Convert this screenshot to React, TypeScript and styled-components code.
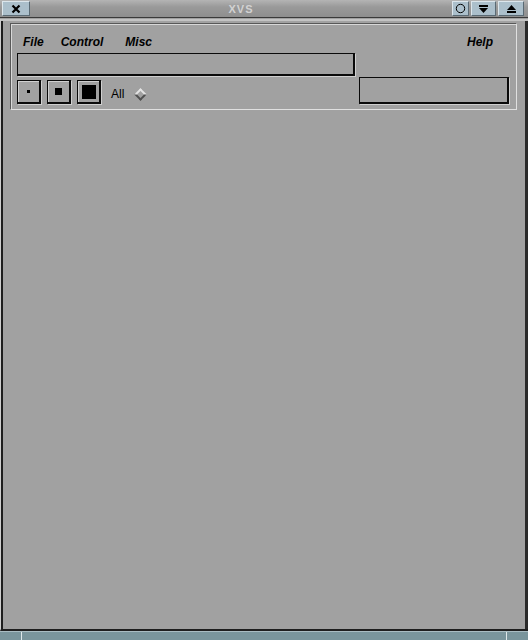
import React from "react";
import styled, { createGlobalStyle } from "styled-components";

const Global = createGlobalStyle`
  html, body { margin: 0; padding: 0; background: #a1a1a1; }
  body { font-family: "Liberation Sans", Arial, sans-serif; }
`;

const Window = styled.div`
  width: 528px;
  height: 640px;
  display: flex;
  flex-direction: column;
  background: #a1a1a1;
  overflow: hidden;
`;

const TitleBar = styled.div`
  height: 18px;
  display: flex;
  align-items: center;
  gap: 2px;
  padding: 0 4px 0 2px;
  box-sizing: border-box;
  background: linear-gradient(#b4b4b4, #9a9a9a 40%, #8e8e8e);
  border-bottom: 1px solid #3a3a3a;
`;

const TitleButton = styled.div<{ $w: number }>`
  width: ${(p) => p.$w}px;
  height: 15px;
  box-sizing: border-box;
  background: #abbfcb;
  border-top: 1px solid #dce6ec;
  border-left: 1px solid #dce6ec;
  border-right: 1px solid #5a6a74;
  border-bottom: 1px solid #5a6a74;
  display: flex;
  align-items: center;
  justify-content: center;
`;

const Title = styled.div`
  flex: 1;
  text-align: center;
  font-size: 11px;
  font-weight: bold;
  color: #d2d2d2;
  letter-spacing: 1px;
`;

const Frame = styled.div`
  flex: 1;
  display: flex;
  flex-direction: column;
  border-left: 1px solid #cfcfcf;
  box-shadow: inset 2px 0 0 #1e1e1e, inset -3px 0 0 #2a2a2a;
  margin-top: 1px;
  padding: 2px 12px 0 9px;
  border-top: 2px solid #c4c4c4;
  border-bottom: 2px solid #1e1e1e;
`;

const Panel = styled.div`
  height: 86px;
  box-sizing: border-box;
  border-top: 1px solid #585858;
  border-left: 1px solid #585858;
  box-shadow: inset 1px 1px 0 #d8d8d8, 1px 1px 0 #e0e0e0;
  padding: 8px 7px 0 6px;
  display: flex;
  flex-direction: column;
`;

const MenuBar = styled.div`
  display: flex;
  align-items: center;
  height: 20px;
  padding-left: 6px;
  padding-right: 16px;
`;

const MenuItem = styled.span<{ $gap: number }>`
  font-style: italic;
  font-weight: bold;
  font-size: 12px;
  color: #000;
  margin-right: ${(p) => p.$gap}px;
`;

const Spacer = styled.div`
  flex: 1;
`;

const Field = styled.div<{ $w: number; $h: number; $top?: number }>`
  width: ${(p) => p.$w}px;
  height: ${(p) => p.$h}px;
  margin-top: ${(p) => p.$top ?? 0}px;
  box-sizing: border-box;
  border: 1px solid #0a0a0a;
  border-right-width: 2px;
  border-bottom-width: 2px;
  box-shadow: 1px 1px 0 #cfcfcf;
  background: #a1a1a1;
`;

const Row = styled.div`
  display: flex;
  align-items: flex-start;
`;

const Tools = styled.div`
  display: flex;
  align-items: center;
  gap: 6px;
  margin-top: 4px;
`;

const SizeButton = styled.div`
  width: 24px;
  height: 24px;
  box-sizing: border-box;
  border: 1px solid #0a0a0a;
  border-right-width: 2px;
  border-bottom-width: 2px;
  box-shadow: inset 1px 1px 0 #d0d0d0, 1px 1px 0 #cfcfcf;
  display: flex;
  align-items: center;
  justify-content: center;
`;

const Dot = styled.div<{ $s: number }>`
  width: ${(p) => p.$s}px;
  height: ${(p) => p.$s}px;
  background: #000;
`;

const AllLabel = styled.span`
  font-size: 12px;
  color: #000;
  margin-left: 4px;
  margin-top: 4px;
`;

const Diamond = styled.div`
  width: 9px;
  height: 9px;
  transform: rotate(45deg);
  box-sizing: border-box;
  border-top: 2px solid #e4e4e4;
  border-left: 2px solid #e4e4e4;
  border-right: 2px solid #505050;
  border-bottom: 2px solid #505050;
  margin-left: 6px;
  margin-top: 4px;
`;

const Body = styled.div`
  flex: 1;
`;

const StatusBar = styled.div`
  height: 8px;
  display: flex;
  background: #7a959c;
  border-top: 1px solid #a9bcc2;
`;

const StatusCell = styled.div<{ $w?: number }>`
  ${(p) => (p.$w ? `width: ${p.$w}px;` : "flex: 1;")}
  border-right: 1px solid #dfe8ea;
  &:last-child { border-right: none; }
`;

export default function App() {
  return (
    <>
      <Global />
      <Window>
        <TitleBar>
          <TitleButton $w={28}>
            <svg width="10" height="10" viewBox="0 0 10 10">
              <path d="M1.5 1.5 L8.5 8.5 M8.5 1.5 L1.5 8.5" stroke="#000" strokeWidth="2.2" />
            </svg>
          </TitleButton>
          <Title>XVS</Title>
          <TitleButton $w={17}>
            <svg width="11" height="11" viewBox="0 0 11 11">
              <circle cx="5.5" cy="5.5" r="4.2" fill="none" stroke="#000" strokeWidth="1" />
            </svg>
          </TitleButton>
          <TitleButton $w={25}>
            <svg width="11" height="10" viewBox="0 0 11 10">
              <rect x="1" y="1" width="9" height="2" fill="#000" />
              <path d="M1 4 L10 4 L5.5 9 Z" fill="#000" />
            </svg>
          </TitleButton>
          <TitleButton $w={26}>
            <svg width="11" height="10" viewBox="0 0 11 10">
              <path d="M1 6 L10 6 L5.5 1 Z" fill="#000" />
              <rect x="1" y="7" width="9" height="2" fill="#000" />
            </svg>
          </TitleButton>
        </TitleBar>
        <Frame>
          <Panel>
            <MenuBar>
              <MenuItem $gap={17}>File</MenuItem>
              <MenuItem $gap={22}>Control</MenuItem>
              <MenuItem $gap={0}>Misc</MenuItem>
              <Spacer />
              <MenuItem $gap={0}>Help</MenuItem>
            </MenuBar>
            <Field $w={338} $h={23} $top={1} />
            <Row>
              <Tools>
                <SizeButton><Dot $s={3} /></SizeButton>
                <SizeButton><Dot $s={7} /></SizeButton>
                <SizeButton><Dot $s={14} /></SizeButton>
                <AllLabel>All</AllLabel>
                <Diamond />
              </Tools>
              <Spacer />
              <Field $w={150} $h={27} $top={1} />
            </Row>
          </Panel>
          <Body />
        </Frame>
        <StatusBar>
          <StatusCell $w={21} />
          <StatusCell />
          <StatusCell $w={21} />
        </StatusBar>
      </Window>
    </>
  );
}
